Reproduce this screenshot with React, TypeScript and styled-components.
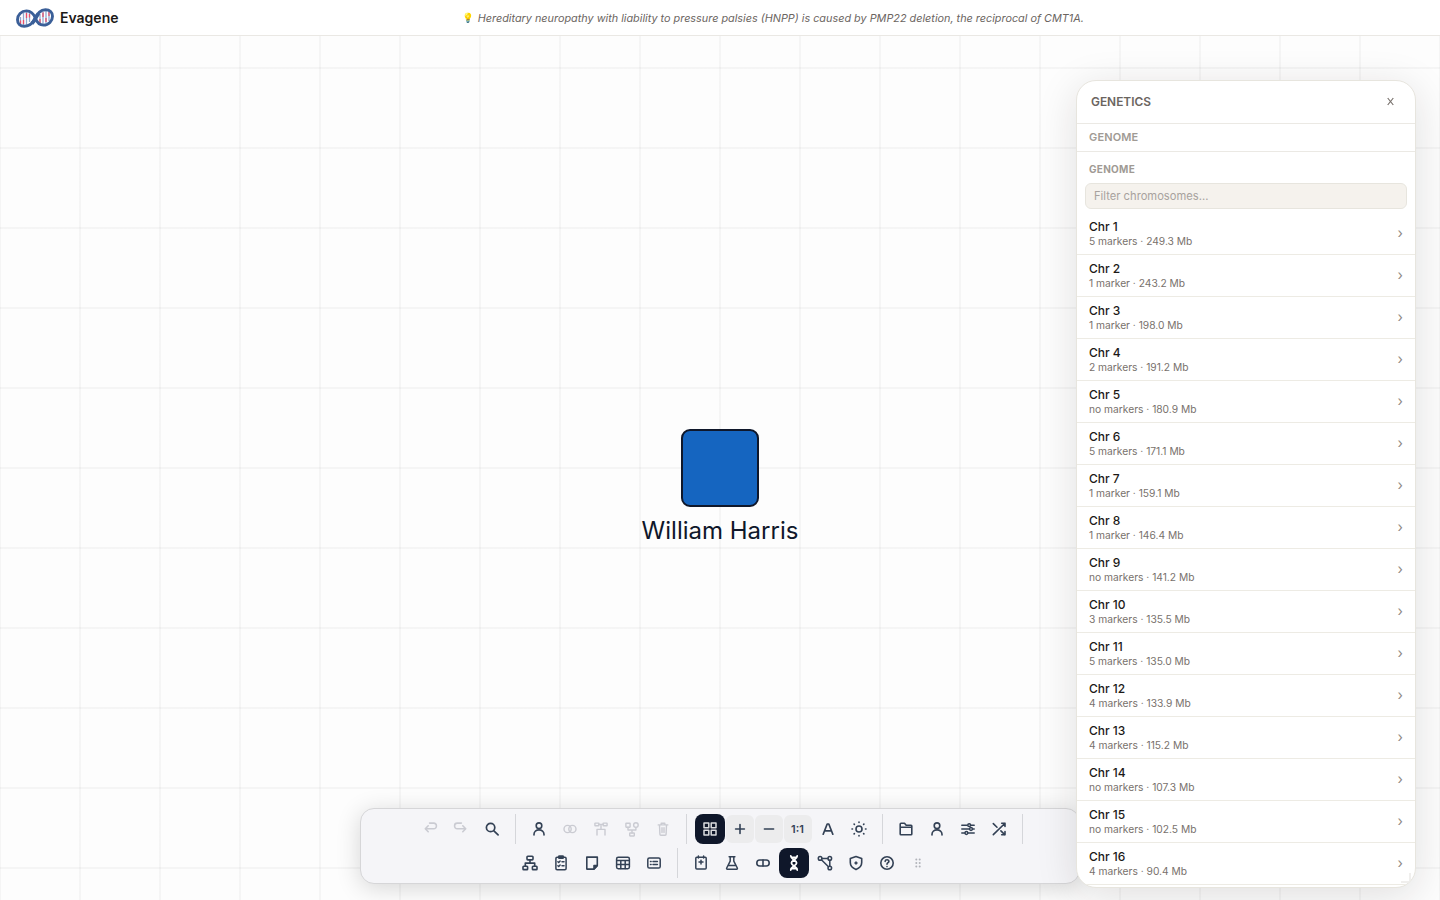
import React from "react";
import styled, { createGlobalStyle, css } from "styled-components";

const GlobalStyle = createGlobalStyle`
  * { box-sizing: border-box; }
  body { margin: 0; background: #fdfdfd; font-family: Inter, "Liberation Sans", sans-serif; }
  button, input { font-family: inherit; }
`;

const Page = styled.div`
  position: relative;
  display: flex;
  flex-direction: column;
  width: 1440px;
  height: 900px;
  overflow: hidden;
`;

const Header = styled.header`
  flex: none;
  display: flex;
  align-items: center;
  height: 36px;
  padding: 0 13px 0 16px;
  background: #fff;
  border-bottom: 1px solid #eae8e4;
`;

const Brand = styled.div`
  display: flex;
  align-items: center;
  gap: 6px;
  font-size: 14px;
  font-weight: 600;
  color: #1c1917;
`;

const Tip = styled.div`
  flex: 1;
  display: flex;
  align-items: center;
  justify-content: center;
  gap: 5px;
  font-size: 10.85px;
  font-style: italic;
  color: #6b655f;
  white-space: nowrap;
`;

const Bulb = styled.span`
  width: 11px;
  font-size: 9.5px;
  font-style: normal;
`;

const Canvas = styled.main`
  flex: 1;
  min-height: 0;
  background:
    repeating-linear-gradient(to right, rgba(0,0,0,0.032) 0 1px, transparent 1px 79px, rgba(0,0,0,0.032) 79px 80px),
    repeating-linear-gradient(to bottom, rgba(0,0,0,0.032) 0 1px, transparent 1px 79px, rgba(0,0,0,0.032) 79px 80px) 0 -48px / 100% 960px,
    #fdfdfd;
`;

const Person = styled.div`
  position: absolute;
  left: 620px;
  top: 429px;
  width: 200px;
  display: flex;
  flex-direction: column;
  align-items: center;
`;

const Name = styled.div`
  margin-top: 8px;
  font-size: 24px;
  line-height: 32px;
  color: #0f172a;
  white-space: nowrap;
`;

const Toolbar = styled.div`
  position: absolute;
  left: 360px;
  top: 808px;
  width: 720px;
  height: 76px;
  padding: 5px;
  display: flex;
  flex-direction: column;
  gap: 4px;
  background: #f5f5f8;
  border: 1px solid #d6d6d8;
  border-radius: 14px;
  box-shadow: 0 4px 24px rgba(0,0,0,0.16);
`;

const ToolRow = styled.div`
  display: flex;
  justify-content: center;
  gap: 1px;
  height: 30px;
`;

const Separator = styled.div<{ $last?: boolean }>`
  width: 1px;
  height: 30px;
  margin: 0 ${p => (p.$last ? 1 : 7)}px 0 7px;
  background: #d5d6da;
`;

const ToolButton = styled.button<{ $active?: boolean; $muted?: boolean; $zoom?: boolean; $history?: boolean }>`
  flex: none;
  display: flex;
  align-items: center;
  justify-content: center;
  width: 30px;
  height: 30px;
  padding: 0;
  border: 0;
  border-radius: 8px;
  background: transparent;
  color: #334155;
  ${p => p.$history && css`width: 28px;`}
  ${p => p.$muted && css`color: #cacbd2;`}
  ${p => p.$active && css`background: #0f172a; color: #fff;`}
  ${p => p.$zoom && css`
    width: 28px;
    height: 28px;
    margin-top: 1px;
    border-radius: 6px;
    background: #ececed;
    font-size: 11px;
    font-weight: 600;
  `}
  svg { display: block; }
`;

const HistoryGroup = styled.div`
  display: flex;
  gap: 1px;
  margin-right: 2px;
`;

const Grip = styled.div`
  display: flex;
  align-items: center;
  width: 15px;
  margin-left: 8px;
  color: #b1b3b9;
`;

const Panel = styled.aside`
  position: absolute;
  left: 1076px;
  top: 80px;
  width: 340px;
  height: 808px;
  display: flex;
  flex-direction: column;
  overflow: hidden;
  background: #fff;
  border: 1px solid #e7e5de;
  border-radius: 20px;
  box-shadow: 0 8px 40px rgba(28,25,23,0.13);
`;

const PanelHeader = styled.div`
  flex: none;
  display: flex;
  align-items: center;
  justify-content: space-between;
  height: 43px;
  padding: 0 20px 2px 14px;
  border-bottom: 1px solid #ebe9e4;
  font-size: 11.9px;
  font-weight: 600;
  color: #6b655f;
`;

const CloseButton = styled.button`
  padding: 0;
  border: 0;
  background: none;
  color: #78716c;
  line-height: 0;
`;

const Breadcrumb = styled.div`
  flex: none;
  height: 28px;
  padding-left: 12px;
  border-bottom: 1px solid #ebe9e4;
  font-size: 11px;
  font-weight: 600;
  line-height: 27px;
  letter-spacing: 0.15px;
  color: #a09a94;
`;

const SectionTitle = styled.div`
  flex: none;
  height: 31px;
  padding: 10px 12px 0;
  font-size: 10px;
  font-weight: 700;
  line-height: 14px;
  letter-spacing: 0.3px;
  color: #a09a94;
`;

const FilterInput = styled.input`
  flex: none;
  height: 26px;
  margin: 0 8px 4px;
  padding: 0 8px;
  border: 1px solid #e7e5de;
  border-radius: 6px;
  background: #f5f2ed;
  font-size: 11.2px;
  &::placeholder { color: #a8a29e; opacity: 1; }
`;

const ChromosomeRow = styled.div`
  flex: none;
  display: flex;
  align-items: center;
  justify-content: space-between;
  height: 42px;
  padding: 0 12px;
  border-bottom: 1px solid #edebe4;
`;

const RowTitle = styled.div`
  font-size: 12px;
  font-weight: 500;
  line-height: 15px;
  color: #1c1917;
`;

const RowMeta = styled.div`
  font-size: 10.24px;
  line-height: 14px;
  color: #78716c;
`;

const Chevron = styled.span`
  padding-bottom: 2px;
  font-size: 14px;
  line-height: 16px;
  color: #8f8983;
`;

const ResizeCorner = styled.div`
  position: absolute;
  right: 4px;
  bottom: 4px;
  width: 10px;
  height: 10px;
  border-right: 2px solid #f0efed;
  border-bottom: 2px solid #f0efed;
`;

const Ico = ({ children, w = 1.6 }: { children: React.ReactNode; w?: number }) => (
  <svg width="16" height="16" viewBox="0 0 16 16" fill="none" stroke="currentColor" strokeWidth={w} strokeLinecap="round" strokeLinejoin="round">
    {children}
  </svg>
);

const icons = {
  undo: <Ico><path d="M5.2 4.8 2.3 7.8l2.9 2.9M2.6 7.8h8.2a2.6 2.6 0 0 0 2.6-2.7v-.4a2.6 2.6 0 0 0-2.6-2.6H6.6" /></Ico>,
  redo: <Ico><path d="m10.8 4.8 2.9 3-2.9 2.9M13.4 7.8H5.2a2.6 2.6 0 0 1-2.6-2.7v-.4a2.6 2.6 0 0 1 2.6-2.6h4.2" /></Ico>,
  search: <Ico w={1.7}><circle cx="6.6" cy="6.5" r="4.2" /><path d="m9.9 9.8 4.2 4" /></Ico>,
  person: <Ico><circle cx="8" cy="4.7" r="2.8" /><path d="M3 14v-.8a5 4.3 0 0 1 10 0v.8" /></Ico>,
  rings: <Ico w={1.4}><circle cx="5.6" cy="8" r="3.6" /><circle cx="10.4" cy="8" r="3.6" /></Ico>,
  offspring: <Ico w={1.4}><rect x="1.9" y="2.1" width="4" height="2.7" rx=".4" /><rect x="10.1" y="2.1" width="4" height="2.7" rx=".4" /><path d="M5.9 3.4h4.2M8 3.4v5M4 14V8.4h8V14" /></Ico>,
  parents: <Ico w={1.4}><rect x="1.9" y="2.2" width="4.2" height="4" rx=".4" /><circle cx="11.9" cy="4.1" r="2.3" /><path d="M4 6.2V9h7.9V6.4M8 9v3" /><rect x="5.7" y="12" width="4.6" height="3" rx=".4" /></Ico>,
  trash: <Ico w={1.4}><path d="M3.2 3.9h9.6M6.2 3.7V2.2h3.6v1.5M4.5 4.2l.4 9.1c0 .6.4 1 1 1h4.2c.6 0 1-.4 1-1l.4-9.1M7 6.8v4.8M9 6.8v4.8" /></Ico>,
  grid: <Ico w={1.5}><g opacity=".85"><rect x="2" y="2" width="4.8" height="4.8" /><rect x="9.2" y="2" width="4.8" height="4.8" /><rect x="2" y="9.2" width="4.8" height="4.8" /><rect x="9.2" y="9.2" width="4.8" height="4.8" /></g></Ico>,
  plus: <Ico w={1.6}><path d="M8 3.6v8.8M3.6 8h8.8" /></Ico>,
  minus: <Ico w={1.6}><path d="M3.4 8h9.2" /></Ico>,
  letter: <Ico w={1.7}><path d="m3.2 13.2 4-10.2h1.6l4 10.2M4.6 9.9h6.8" /></Ico>,
  sun: <Ico w={1.6}><circle cx="8" cy="8" r="3" /><path d="M8 1v.5M8 14.5v.5M1 8h.5M14.5 8h.5M3.1 3.1l.3.3M12.600 12.600l.3.3M12.900 3.100l-.3.3M3.400 12.600l-.3.3" /></Ico>,
  folder: <Ico><path d="M2.2 3.2c0-.5.3-.9.8-.9h3.5l1.7 1.9h4.9c.4 0 .7.3.7.8v8c0 .5-.3.8-.8.8H3c-.5 0-.8-.3-.8-.8zM2.2 6.2h11.6" /></Ico>,
  sliders: <Ico w={1.5}><path d="M1.8 4.2h12.4M1.8 8h12.4M1.8 12h12.4" /><g fill="#f5f5f8"><circle cx="9.2" cy="4.2" r="1.4" /><circle cx="11" cy="8" r="1.4" /><circle cx="6.4" cy="12" r="1.4" /></g></Ico>,
  shuffle: <Ico w={1.6}><path d="M10.7 2.2H14v3.3M2.3 13.6 14 2.2M14 10.5v3.3h-3.3M9.9 9.9l4.1 3.9M2.3 2.6l3.7 3.6" /></Ico>,
  tree: <Ico><rect x="5" y="1.3" width="6" height="3.6" rx=".8" /><rect x="1" y="11.3" width="4.6" height="3.3" rx=".7" /><rect x="10.4" y="11.3" width="4.6" height="3.3" rx=".7" /><path d="M8 5v3M3.3 11.2V8.1h9.4v3.1" /></Ico>,
  clipboard: <Ico w={1.5}><rect x="2.9" y="2.2" width="10.2" height="12.6" rx="1.2" /><rect x="5.7" y="1.1" width="4.6" height="2.2" rx=".6" fill="currentColor" /><path d="m4.9 6.8.8.7 1.4-1.5M9 6.8h2M4.9 10.8l.8.7L7.1 10M9 10.8h2" /></Ico>,
  note: <Ico><path d="M2.8 2.1h10.5v8.4l-3.4 3.6H2.8z" /><path d="M13.2 10.6H10V14z" fill="currentColor" /></Ico>,
  table: <Ico w={1.5}><rect x="1.6" y="2.3" width="12.8" height="11.4" rx="1.6" /><path d="M1.8 5.6h12.4M1.8 9.6h12.4M5.8 5.5v8M10.2 5.5v8" /></Ico>,
  list: <Ico w={1.5}><rect x="1.8" y="2.9" width="12.4" height="10.2" rx="1.6" /><path d="M4.5 6.6h.6M7 6.6h4.4M4.5 9.5h.6M7 9.5h4.4" /></Ico>,
  record: <Ico w={1.5}><rect x="2.8" y="2.3" width="10.4" height="11.8" rx="1" /><path d="M5.4 1.1v2M10.6 1.1v2M8 5.2v3.9M6 7.1h4" /></Ico>,
  flask: <Ico w={1.5}><path d="M5.1 1.8h5.8M6.2 1.9v4.3L2.7 13c-.3.7 0 1.2.7 1.2h9.2c.7 0 1-.5.7-1.2L9.8 6.2V1.9M4.1 10.4h7.8" /></Ico>,
  pill: <Ico><rect x="1.8" y="5" width="12.4" height="6" rx="3" /><path d="M8 5v6" /></Ico>,
  dna: <Ico w={1.8}><path d="M4.800 1c.2 2.400 1.500 3 3.200 4.100 1.800 1.100 2.600 1.700 2.600 2.900S9.800 9.800 8 10.900C6.300 12 5 12.600 4.800 15M11.200 1c-.2 2.400-1.500 3-3.200 4.100C6.200 6.200 5.400 6.800 5.400 8s.8 1.800 2.600 2.900c1.700 1.100 3 1.700 3.200 4.100M6 2.500h4M6 13.500h4" /></Ico>,
  network: <Ico w={1.5}><circle cx="3.1" cy="3.4" r="1.8" /><circle cx="12.8" cy="3.4" r="1.8" /><circle cx="12.8" cy="13" r="1.8" /><path d="M4.9 3.4H11M12.8 5.2v6M4.4 4.7l7.1 7" /></Ico>,
  shield: <Ico w={1.6}><path d="M8 1.5 13.7 3.600v4c0 3.400-2.300 5.700-5.700 7-3.400-1.300-5.700-3.600-5.700-7v-4z" /><path d="M8 7v2M7 8h2" /></Ico>,
  help: <Ico w={1.6}><circle cx="8" cy="8" r="6.2" /><path d="M6.1 6.4c.1-1.1.9-1.700 1.900-1.700 1.100 0 1.900.7 1.900 1.700 0 1.300-1.900 1.400-1.900 2.900M8 11.500v.1" /></Ico>,
  grip: <svg width="14" height="14" viewBox="0 0 14 14" fill="currentColor"><circle cx="5.3" cy="3.4" r="1" /><circle cx="8.7" cy="3.4" r="1" /><circle cx="5.3" cy="7" r="1" /><circle cx="8.7" cy="7" r="1" /><circle cx="5.3" cy="10.6" r="1" /><circle cx="8.7" cy="10.6" r="1" /></svg>,
};

const Logo = () => (
  <svg width="38" height="20" viewBox="0 0 38 20" fill="none">
    <path d="M4.500 16V9M7.500 17V5M10.500 17V4M13.500 14V4M24 15.500V6M27 16V4M30 15.500V3M33 13V3" stroke="#8fa8cf" strokeWidth="1.300" />
    <path d="M4.500 12.500v3.500M10.500 5v5M7.500 12v4M13.500 6v3.500M24 11v4M27 4.500v4.500M30 10v4M33 4v4" stroke="#e8506a" strokeWidth="1.300" />
    <path d="M18 12.500C21 5 25 1.700 29.500 1.700c4.300 0 7 2.600 7 6.500 0 4.800-3.800 8.900-9 8.900-4.600 0-6.500-2.600-8-6.600C17.500 5.200 15 2.900 10.500 2.900 5.300 2.900 1.500 6.700 1.500 11.700c0 4 2.600 6.600 6.700 6.600 4.600 0 7.600-2.300 9.800-5.800Z" stroke="#3b5f98" strokeWidth="2.900" />
    <path d="M16 15.500C18.500 13 20 9 22.500 5.500" stroke="#3b5f98" strokeWidth="3.800" />
  </svg>
);

const chromosomes: [string, string, string][] = [
  ["Chr 1", "5 markers", "249.3"], ["Chr 2", "1 marker", "243.2"], ["Chr 3", "1 marker", "198.0"], ["Chr 4", "2 markers", "191.2"],
  ["Chr 5", "no markers", "180.9"], ["Chr 6", "5 markers", "171.1"], ["Chr 7", "1 marker", "159.1"], ["Chr 8", "1 marker", "146.4"],
  ["Chr 9", "no markers", "141.2"], ["Chr 10", "3 markers", "135.5"], ["Chr 11", "5 markers", "135.0"], ["Chr 12", "4 markers", "133.9"],
  ["Chr 13", "4 markers", "115.2"], ["Chr 14", "no markers", "107.3"], ["Chr 15", "no markers", "102.5"], ["Chr 16", "4 markers", "90.4"],
];

export default function App() {
  return (
    <Page>
      <GlobalStyle />
      <Header>
        <Brand><Logo />Evagene</Brand>
        <Tip>
          <Bulb>💡</Bulb>
          <span>Hereditary neuropathy with liability to pressure palsies (HNPP) is caused by PMP22 deletion, the reciprocal of CMT1A.</span>
        </Tip>
      </Header>
      <Canvas />
      <Person>
        <svg width="78" height="78" viewBox="0 0 78 78"><rect x="1" y="1" width="76" height="76" rx="8" fill="#1565c0" stroke="#0f172a" strokeWidth="2" /></svg>
        <Name>William Harris</Name>
      </Person>
      <Toolbar>
        <ToolRow>
          <HistoryGroup>
            <ToolButton $history $muted>{icons.undo}</ToolButton>
            <ToolButton $history $muted>{icons.redo}</ToolButton>
          </HistoryGroup>
          <ToolButton>{icons.search}</ToolButton>
          <Separator />
          <ToolButton>{icons.person}</ToolButton>
          <ToolButton $muted>{icons.rings}</ToolButton>
          <ToolButton $muted>{icons.offspring}</ToolButton>
          <ToolButton $muted>{icons.parents}</ToolButton>
          <ToolButton $muted>{icons.trash}</ToolButton>
          <Separator />
          <ToolButton $active>{icons.grid}</ToolButton>
          <ToolButton $zoom>{icons.plus}</ToolButton>
          <ToolButton $zoom>{icons.minus}</ToolButton>
          <ToolButton $zoom>1:1</ToolButton>
          <ToolButton>{icons.letter}</ToolButton>
          <ToolButton>{icons.sun}</ToolButton>
          <Separator />
          <ToolButton>{icons.folder}</ToolButton>
          <ToolButton>{icons.person}</ToolButton>
          <ToolButton>{icons.sliders}</ToolButton>
          <ToolButton>{icons.shuffle}</ToolButton>
          <Separator $last />
        </ToolRow>
        <ToolRow>
          <ToolButton>{icons.tree}</ToolButton>
          <ToolButton>{icons.clipboard}</ToolButton>
          <ToolButton>{icons.note}</ToolButton>
          <ToolButton>{icons.table}</ToolButton>
          <ToolButton>{icons.list}</ToolButton>
          <Separator />
          <ToolButton>{icons.record}</ToolButton>
          <ToolButton>{icons.flask}</ToolButton>
          <ToolButton>{icons.pill}</ToolButton>
          <ToolButton $active>{icons.dna}</ToolButton>
          <ToolButton>{icons.network}</ToolButton>
          <ToolButton>{icons.shield}</ToolButton>
          <ToolButton>{icons.help}</ToolButton>
          <Grip>{icons.grip}</Grip>
        </ToolRow>
      </Toolbar>
      <Panel>
        <PanelHeader>
          GENETICS
          <CloseButton aria-label="Close">
            <svg width="9" height="9" viewBox="0 0 9 9" stroke="currentColor" strokeWidth="1.2"><path d="m1.700 1 5.600 7M7.300 1 1.700 8" /></svg>
          </CloseButton>
        </PanelHeader>
        <Breadcrumb>GENOME</Breadcrumb>
        <SectionTitle>GENOME</SectionTitle>
        <FilterInput placeholder="Filter chromosomes..." />
        {chromosomes.map(([name, markers, length]) => (
          <ChromosomeRow key={name}>
            <div>
              <RowTitle>{name}</RowTitle>
              <RowMeta>{markers} · {length} Mb</RowMeta>
            </div>
            <Chevron>›</Chevron>
          </ChromosomeRow>
        ))}
        <ResizeCorner />
      </Panel>
    </Page>
  );
}
